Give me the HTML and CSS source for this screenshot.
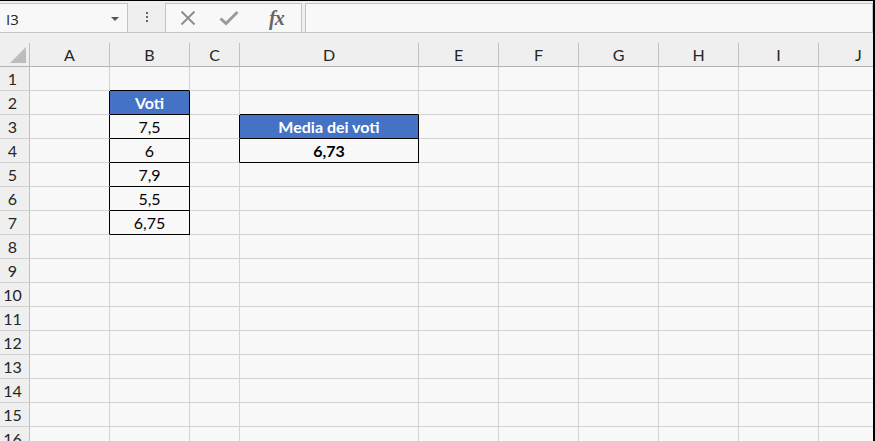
FILE: index.html
```html
<!DOCTYPE html>
<html lang="it">
<head>
    <meta charset="UTF-8">
    <meta name="viewport" content="width=device-width, initial-scale=1.0">
    <title>Media dei voti</title>
    <link rel="stylesheet" href="styles.css">
</head>
<body>
    <div class="window">
        <div class="topbar">
            <div class="namebox">
                <span class="namebox-text">I3</span>
                <span class="namebox-arrow"></span>
            </div>
            <div class="grip">
                <span></span><span></span><span></span>
            </div>
            <div class="fx-buttons">
                <span class="fx-btn btn-cancel">
                    <svg width="16" height="16" viewBox="0 0 16 16">
                        <path d="M1.5 1.5 L14.5 14.5 M14.5 1.5 L1.5 14.5" stroke="#8c8c8c" stroke-width="1.8" fill="none"/>
                    </svg>
                </span>
                <span class="fx-btn btn-enter">
                    <svg width="20" height="16" viewBox="0 0 20 16">
                        <path d="M1.5 8.5 L7 13.5 L18.5 2" stroke="#9a9a9a" stroke-width="3" fill="none"/>
                    </svg>
                </span>
                <span class="fx-btn btn-fx">fx</span>
            </div>
            <div class="formula-input"></div>
        </div>

        <div class="head-gap"></div>

        <div class="sheet">
            <div class="corner"><span class="corner-tri"></span></div>
            <div class="ch">A</div><div class="ch">B</div><div class="ch">C</div><div class="ch">D</div><div class="ch">E</div><div class="ch">F</div><div class="ch">G</div><div class="ch">H</div><div class="ch">I</div><div class="ch">J</div>

            <div class="rh">1</div><div class="c"></div><div class="c bb"></div><div class="c"></div><div class="c"></div><div class="c"></div><div class="c"></div><div class="c"></div><div class="c"></div><div class="c"></div><div class="c"></div>
            <div class="rh">2</div><div class="c br"></div><div class="c bx th">Voti</div><div class="c"></div><div class="c bb"></div><div class="c"></div><div class="c"></div><div class="c"></div><div class="c"></div><div class="c"></div><div class="c"></div>
            <div class="rh">3</div><div class="c br"></div><div class="c bx">7,5</div><div class="c br"></div><div class="c bx th">Media dei voti</div><div class="c"></div><div class="c"></div><div class="c"></div><div class="c"></div><div class="c"></div><div class="c"></div>
            <div class="rh">4</div><div class="c br"></div><div class="c bx">6</div><div class="c br"></div><div class="c bx strong">6,73</div><div class="c"></div><div class="c"></div><div class="c"></div><div class="c"></div><div class="c"></div><div class="c"></div>
            <div class="rh">5</div><div class="c br"></div><div class="c bx">7,9</div><div class="c"></div><div class="c"></div><div class="c"></div><div class="c"></div><div class="c"></div><div class="c"></div><div class="c"></div><div class="c"></div>
            <div class="rh">6</div><div class="c br"></div><div class="c bx">5,5</div><div class="c"></div><div class="c"></div><div class="c"></div><div class="c"></div><div class="c"></div><div class="c"></div><div class="c"></div><div class="c"></div>
            <div class="rh">7</div><div class="c br"></div><div class="c bx">6,75</div><div class="c"></div><div class="c"></div><div class="c"></div><div class="c"></div><div class="c"></div><div class="c"></div><div class="c"></div><div class="c"></div>
            <div class="rh">8</div><div class="c"></div><div class="c"></div><div class="c"></div><div class="c"></div><div class="c"></div><div class="c"></div><div class="c"></div><div class="c"></div><div class="c"></div><div class="c"></div>
            <div class="rh">9</div><div class="c"></div><div class="c"></div><div class="c"></div><div class="c"></div><div class="c"></div><div class="c"></div><div class="c"></div><div class="c"></div><div class="c"></div><div class="c"></div>
            <div class="rh">10</div><div class="c"></div><div class="c"></div><div class="c"></div><div class="c"></div><div class="c"></div><div class="c"></div><div class="c"></div><div class="c"></div><div class="c"></div><div class="c"></div>
            <div class="rh">11</div><div class="c"></div><div class="c"></div><div class="c"></div><div class="c"></div><div class="c"></div><div class="c"></div><div class="c"></div><div class="c"></div><div class="c"></div><div class="c"></div>
            <div class="rh">12</div><div class="c"></div><div class="c"></div><div class="c"></div><div class="c"></div><div class="c"></div><div class="c"></div><div class="c"></div><div class="c"></div><div class="c"></div><div class="c"></div>
            <div class="rh">13</div><div class="c"></div><div class="c"></div><div class="c"></div><div class="c"></div><div class="c"></div><div class="c"></div><div class="c"></div><div class="c"></div><div class="c"></div><div class="c"></div>
            <div class="rh">14</div><div class="c"></div><div class="c"></div><div class="c"></div><div class="c"></div><div class="c"></div><div class="c"></div><div class="c"></div><div class="c"></div><div class="c"></div><div class="c"></div>
            <div class="rh">15</div><div class="c"></div><div class="c"></div><div class="c"></div><div class="c"></div><div class="c"></div><div class="c"></div><div class="c"></div><div class="c"></div><div class="c"></div><div class="c"></div>
            <div class="rh">16</div><div class="c"></div><div class="c"></div><div class="c"></div><div class="c"></div><div class="c"></div><div class="c"></div><div class="c"></div><div class="c"></div><div class="c"></div><div class="c"></div>
        </div>
    </div>
</body>
</html>
```

FILE: styles.css
```css
body {
    margin: 0;
    background-color: #f8f8f8;
    font-family: Lato, "Open Sans", sans-serif;
}

.window {
    width: 873px;
    height: 440px;
    border-top: 1px solid #000;
    border-right: 2px solid #000;
    background-color: #f8f8f8;
    overflow: hidden;
}

/* formula bar */
.topbar {
    height: 31px;
    display: flex;
    align-items: flex-end;
    background-color: #efefef;
    border-bottom: 1px solid #c4c4c4;
}

.namebox {
    width: 127px;
    height: 28px;
    margin-left: -1px;
    flex-shrink: 0;
    display: flex;
    align-items: center;
    justify-content: space-between;
    background-color: #f8f8f8;
    border: 1px solid #c4c4c4;
    border-bottom: none;
}

.namebox-text {
    font-family: "Open Sans", sans-serif;
    font-size: 15px;
    color: #222;
    padding-left: 6px;
    padding-top: 1px;
}

.namebox-arrow {
    width: 0;
    height: 0;
    margin-right: 8px;
    margin-top: 2px;
    border-left: 4px solid transparent;
    border-right: 4px solid transparent;
    border-top: 4px solid #555;
}

.grip {
    width: 37px;
    height: 28px;
    flex-shrink: 0;
    display: flex;
    flex-direction: column;
    align-items: center;
    justify-content: center;
    gap: 2px;
    padding-bottom: 1px;
}

.grip span {
    width: 2px;
    height: 2px;
    background-color: #666;
}

.fx-buttons {
    width: 135px;
    height: 28px;
    flex-shrink: 0;
    display: flex;
    align-items: center;
    background-color: #f8f8f8;
    border: 1px solid #c4c4c4;
    border-bottom: none;
}

.fx-btn {
    display: flex;
    align-items: center;
    justify-content: center;
    height: 28px;
}

.btn-cancel {
    width: 42px;
    padding-left: 1px;
}

.btn-enter {
    width: 40px;
}

.btn-fx {
    width: 52px;
    justify-content: flex-start;
    padding-left: 20px;
    box-sizing: border-box;
    font-family: "Liberation Serif", serif;
    font-style: italic;
    font-weight: bold;
    font-size: 20px;
    color: #666;
    letter-spacing: -1px;
}

.formula-input {
    flex: 1;
    height: 28px;
    margin-left: 3px;
    background-color: #f8f8f8;
    border: 1px solid #c4c4c4;
    border-bottom: none;
}

.head-gap {
    height: 10px;
    background-color: #efefef;
}

/* grid */
.sheet {
    display: grid;
    grid-template-columns: 30px 80px 80px 50px 179px 80px 80px 80px 80px 80px 80px;
    grid-auto-rows: 24px;
    font-size: 16px;
    line-height: 23px;
    color: #000;
}

.sheet > div {
    box-sizing: border-box;
    border-right: 1px solid #d4d4d4;
    border-bottom: 1px solid #d4d4d4;
    text-align: center;
    white-space: nowrap;
    overflow: hidden;
}

.corner {
    background-color: #efefef;
    position: relative;
}

.sheet > .corner,
.sheet > .ch {
    border-right-color: #c0c0c0;
    border-bottom-color: #b4b4b4;
}

.corner-tri {
    position: absolute;
    right: 3px;
    bottom: 3px;
    width: 0;
    height: 0;
    border-left: 16px solid transparent;
    border-bottom: 16px solid #bdbdbd;
}

.ch {
    background-color: #efefef;
    color: #262626;
}

.rh {
    background-color: #efefef;
    color: #262626;
    padding-right: 4px;
}

.sheet > .rh {
    border-right-color: #c0c0c0;
    border-bottom-color: #d0d0d0;
}

.c {
    background-color: #f8f8f8;
}

.sheet > .bx {
    border-right-color: #000;
    border-bottom-color: #000;
}

.sheet > .br {
    border-right-color: #000;
}

.sheet > .bb {
    border-bottom-color: #000;
}

.th {
    background-color: #4472c4;
    color: #fff;
    font-weight: bold;
}

.strong {
    font-weight: bold;
}
```
